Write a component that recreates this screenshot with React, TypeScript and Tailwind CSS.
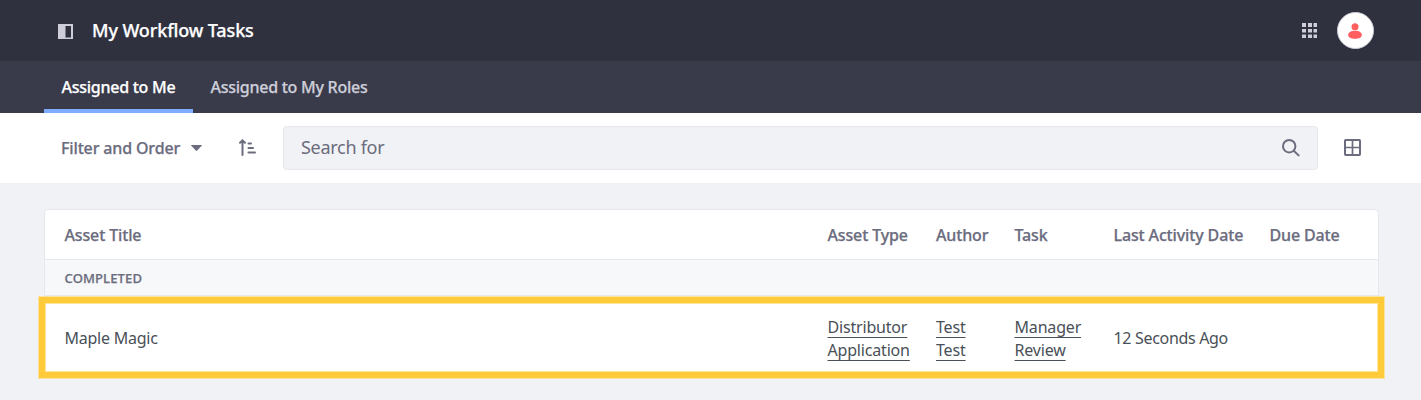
import React from "react";

const columns = "grid grid-cols-[763px_108.5px_78.5px_99px_156px_1fr] pl-[19.5px]";
const strong = "font-medium [-webkit-text-stroke:0.25px_currentColor]";

function Underlined({ words }: { words: string[] }) {
  return (
    <div className="flex flex-col items-start pt-[3px]">
      {words.map((word, i) => (
        <span key={i} className="h-[23px] leading-[23px] underline decoration-1 underline-offset-[4px]">
          {word}
        </span>
      ))}
    </div>
  );
}

export default function App() {
  return (
    <div className="h-[400px] w-full overflow-hidden bg-[#f1f2f5] font-['Noto_Sans',sans-serif] text-base text-[#6b6c7e]">
      <header className="flex h-[61px] items-center bg-[#30313f] pl-[58px] pr-[47px]">
        <svg className="mt-px size-[15px] shrink-0" viewBox="0 0 15 15">
          <path fill="#cdced9" fillRule="evenodd" d="M0 0H15V15H0ZM7.500 2H13V13.500H7.500Z" />
        </svg>
        <h1 className={`${strong} mb-px ml-[19px] text-[18px] leading-6 tracking-[-0.11px] whitespace-nowrap text-white`}>My Workflow Tasks</h1>
        <svg className="ml-auto size-[15px]" viewBox="0 0 15 15" fill="#cdced9">
          <path d="M0 0h4v4H0ZM6 0h4v4H6ZM11.500 0h3.500v4h-3.500ZM0 6h4v3.500H0ZM6 6h4v3.500H6ZM11.500 6h3.500v3.500h-3.500ZM0 11.500h4v3.500H0ZM6 11.500h4v3.500H6ZM11.500 11.500h3.500v3.500h-3.500Z" />
        </svg>
        <div className="ml-5 flex size-[37px] items-center justify-center rounded-full border border-[#cdced9] bg-white">
          <svg className="mr-px size-4" viewBox="0 0 16 16" fill="#ff5f5f">
            <circle cx="8" cy="3.7" r="3.5" />
            <path d="M1.200 12C1.200 9.200 4.400 7.800 8 7.800s6.800 1.400 6.800 4.200c0 2.500-2.600 3.700-6.800 3.700S1.200 14.500 1.200 12Z" />
          </svg>
        </div>
      </header>
      <nav className={`${strong} flex h-[52px] bg-[#393a4a] pl-11 tracking-[-0.26px]`}>
        <div className="w-[149px] border-b-4 border-[#80acff] pl-[17.5px] leading-[52px] whitespace-nowrap text-white">Assigned to Me</div>
        <div className="pl-[17.5px] leading-[52px] whitespace-nowrap text-[#cdced9]">Assigned to My Roles</div>
      </nav>
      <div className="flex h-[70px] items-center bg-white pl-[61px]">
        <div className={`${strong} w-[130px] tracking-[-0.15px] whitespace-nowrap`}>Filter and Order</div>
        <svg className="h-[6px] w-[11px]" viewBox="0 0 11 6">
          <path fill="#6b6c7e" d="M.5 0h10q.8 0 .2.800L6.200 5.500q-.7.700-1.400 0L.3.800Q-.3 0 .5 0Z" />
        </svg>
        <svg className="mb-px ml-[36px] h-[17px] w-[18px]" viewBox="0 0 18 17" fill="none" stroke="#6b6c7e" strokeWidth="2" strokeLinecap="round">
          <path d="M4.500 1.500V16M2 3.700l2.500-2.300L7 3.700M10.500 4.500h2.500M10.500 9h4.500M10.500 13.500h6.500" />
        </svg>
        <div className="ml-[27px] flex h-11 w-[1035px] items-center justify-between rounded border border-[#e7e7ed] bg-[#f1f2f5] pr-[17px] pb-px pl-[17px] text-[18px] tracking-[-0.28px]">
          <span>Search for</span>
          <svg className="size-[18px]" viewBox="0 0 18 18" fill="none" stroke="#6b6c7e" strokeWidth="2" strokeLinecap="round">
            <circle cx="7.200" cy="7.200" r="6.200" />
            <path d="M12 12l4.600 4.400" />
          </svg>
        </div>
        <svg className="mb-px ml-[26px] size-[17px]" viewBox="0 0 17 17" fill="none" stroke="#6b6c7e" strokeWidth="2">
          <rect x="1" y="1" width="15" height="15" rx=".7" />
          <path strokeWidth="1.700" d="M8.500 1v15M1 8.500h15" />
        </svg>
      </div>
      <main className="px-11 pt-[26px]">
        <div className="w-[1335px] rounded-[4px] border border-[#e7e7ed] bg-white">
          <div className={`${columns} ${strong} h-[50px] items-center border-b border-[#e7e7ed] tracking-[-0.14px] whitespace-nowrap`}>
            <span>Asset Title</span>
            <span>Asset Type</span>
            <span>Author</span>
            <span>Task</span>
            <span>Last Activity Date</span>
            <span>Due Date</span>
          </div>
          <div className={`${strong} flex h-[36px] items-center border-b border-[#e7e7ed] bg-[#f7f8f9] pt-[2px] pl-[19.5px] text-[13px] tracking-[0.14px]`}>COMPLETED</div>
          <div className="-mx-[6px] mt-px h-[81px] border-[6px] border-[#ffcb3a] bg-white shadow-[0_0_0_1px_#fbe2a0,inset_0_0_0_1px_#ffe59c]">
            <div className={`${columns} h-full items-center tracking-[-0.18px] whitespace-nowrap text-[#495057]`}>
              <span className="tracking-[-0.24px]">Maple Magic</span>
              <Underlined words={["Distributor", "Application"]} />
              <Underlined words={["Test", "Test"]} />
              <Underlined words={["Manager", "Review"]} />
              <span className="tracking-[-0.32px]">12 Seconds Ago</span>
              <span />
            </div>
          </div>
        </div>
      </main>
    </div>
  );
}
